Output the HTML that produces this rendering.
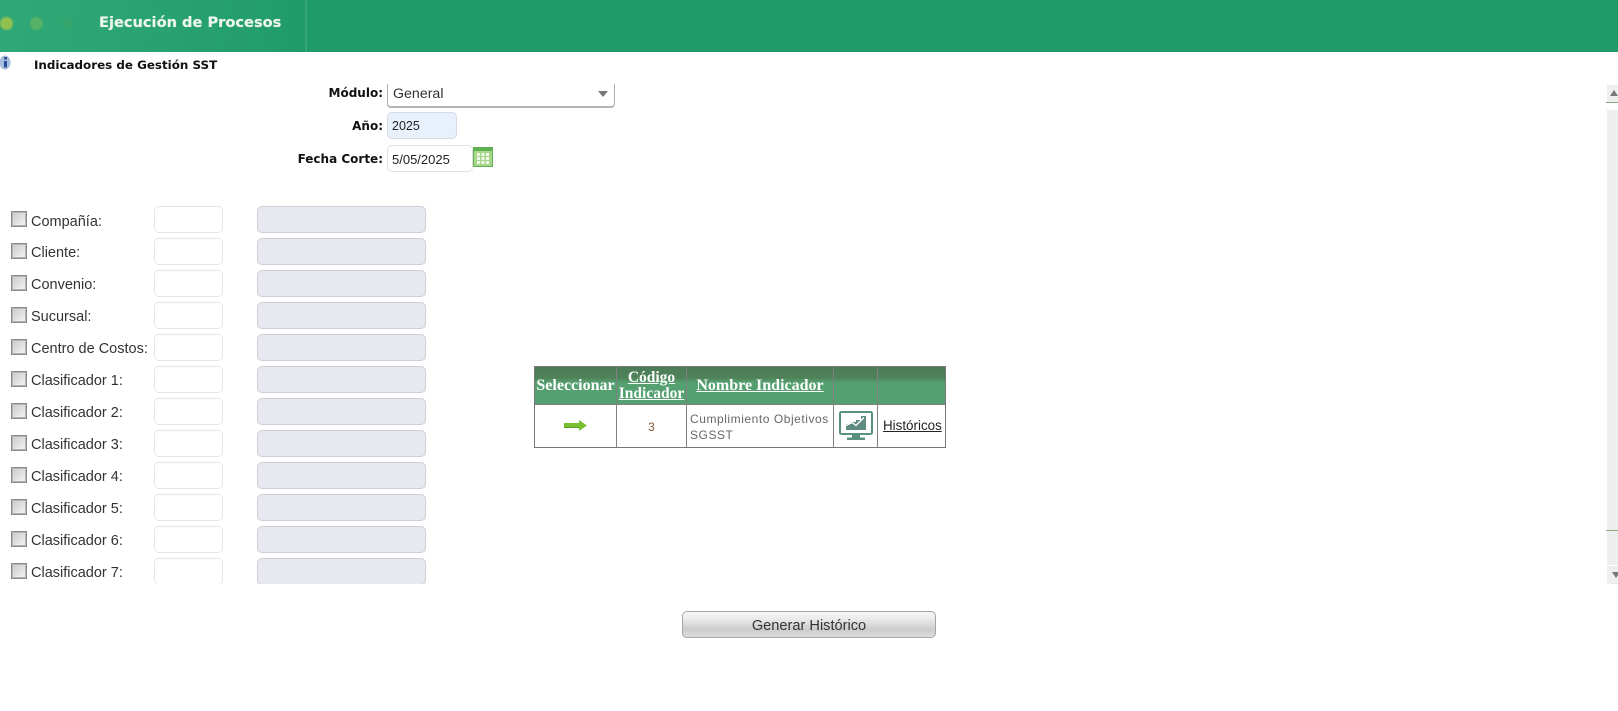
<!DOCTYPE html>
<html><head><meta charset="utf-8"><title>Ejecución de Procesos</title>
<style>
html,body{margin:0;padding:0;width:1618px;height:711px;overflow:hidden;background:#fff}
body{position:relative;font-family:"Liberation Sans",sans-serif}
.a{position:absolute;white-space:nowrap}
#hdr{left:0;top:0;width:1618px;height:52px;background:#1f9b69}
#glow{left:0;top:0;width:306px;height:52px;background:linear-gradient(100deg,#30a878 0%,#2aa372 45%,#1f9b69 100%)}
#div{left:305px;top:0;width:2px;height:52px;background:#36a679}
.dot{border-radius:50%;width:13px;height:13px;top:17px;filter:blur(.8px)}
#title{left:99px;top:13px;font:bold 14.6px/20px "DejaVu Sans",sans-serif;color:#eef6f0;width:190px;text-shadow:0 0 1px rgba(255,255,255,.5)}
#sub{left:34px;top:57px;font:bold 11.9px/16px "DejaVu Sans",sans-serif;color:#111}
.lb{font:bold 12px/16px "DejaVu Sans",sans-serif;color:#111;text-align:right;width:200px;left:183px}
.in{box-sizing:border-box;border:1px solid #e2e2e2;border-radius:5px;background:#fff;font:12.5px/27px "Liberation Sans",sans-serif;color:#222;padding-left:4px}
.t{left:31px;font:14.5px/18px "Liberation Sans",sans-serif;color:#333}
.cb{left:11px;width:16px;height:16px;box-sizing:border-box;border:1px solid #8c8c8c;box-shadow:inset 0 0 0 1px #b4b4b4;background:linear-gradient(135deg,#c8c8c8,#f6f6f6)}
.i1{left:154px;width:69px;height:27px;border:1px solid #e6e6e6;border-radius:5px;box-sizing:border-box;background:#fff}
.i2{left:257px;width:169px;height:27px;border:1px solid #cfcfd6;border-radius:5px;box-sizing:border-box;background:#e8e8f0}
#clip{left:0;top:190px;width:600px;height:394px;overflow:hidden}
#sel{left:387px;top:84px;width:228px;height:24px;box-sizing:border-box;border:1px solid #b0b0b0;border-top:0;border-radius:0 0 4px 4px;border-bottom:2px solid #b4b4b4;font:14.2px/18px "Liberation Sans",sans-serif;color:#333;padding:1px 0 0 5px}
#arr{left:598px;top:91px;width:0;height:0;border-left:5.5px solid transparent;border-right:5.5px solid transparent;border-top:6px solid #777}
#tb{left:534px;top:366px;width:412px;height:82px;box-sizing:border-box;border:1px solid #777}
#th{left:0;top:0;width:410px;height:37px;background:linear-gradient(#4b7c58 0,#4f8159 28%,#55a070 42%,#55a070 100%)}
.v{top:0;width:1px;height:80px;background:#808080}
#hb{left:0;top:37px;width:410px;height:1px;background:#808080}
.h{font:bold 16px/16px "Liberation Serif",serif;color:#fff;text-align:center}
.h u{text-decoration:underline}
#btn{left:682px;top:611px;width:254px;height:27px;box-sizing:border-box;border:1px solid #a5a5a5;border-radius:5px;background:linear-gradient(#f6f6f6 0,#ececec 25%,#cccccc 70%,#dcdcdc 100%);font:14.6px/28px "Liberation Sans",sans-serif;color:#333;text-align:center}
.sb{left:1607px;width:11px;background:#eeeeee}
.gl{left:1606px;width:12px;height:1px;background:#8fa878}
</style></head><body>
<div class="a" id="hdr"></div>
<div class="a" id="glow"></div>
<div class="a" id="div"></div>
<div class="a dot" style="left:0;background:#8fc050"></div>
<div class="a dot" style="left:30px;background:#55b264"></div>
<div class="a dot" style="left:61px;background:#33a46e"></div>
<div class="a" id="title">Ejecución de Procesos</div>

<svg class="a" style="left:0;top:55px" width="12" height="15" viewBox="0 0 12 15"><ellipse cx="5" cy="7.5" rx="5.5" ry="7" fill="#a9bfe0"/><rect x="4" y="6" width="3" height="6.5" fill="#2b4f9c"/><rect x="4" y="2" width="3" height="2.5" fill="#2b4f9c"/></svg>
<div class="a" id="sub">Indicadores de Gestión SST</div>

<div class="a lb" style="top:85px">Módulo:</div>
<div class="a" id="sel">General</div>
<div class="a" id="arr"></div>
<div class="a lb" style="top:118px">Año:</div>
<div class="a in" style="left:387px;top:112px;width:70px;height:27px;background:#e8f0fb;border-color:#d6dbe6;line-height:27px">2025</div>
<div class="a lb" style="top:151px">Fecha Corte:</div>
<div class="a in" style="left:387px;top:145px;width:86px;height:27px;font-size:13px">5/05/2025</div>
<svg class="a" style="left:473px;top:147px" width="20" height="20" viewBox="0 0 20 20"><rect x=".5" y=".5" width="19" height="19" fill="#a8d68c" stroke="#5fb04e"/><rect x="1" y="1" width="18" height="3" fill="#5fb04e"/><g fill="#eef8e6"><rect x="4" y="6" width="3" height="3"/><rect x="8.5" y="6" width="3" height="3"/><rect x="13" y="6" width="3" height="3"/><rect x="4" y="10" width="3" height="3"/><rect x="8.5" y="10" width="3" height="3"/><rect x="13" y="10" width="3" height="3"/><rect x="4" y="14" width="3" height="3"/><rect x="8.5" y="14" width="3" height="3"/><rect x="13" y="14" width="3" height="3"/></g></svg>

<div class="a" id="clip">
<div class="a cb" style="top:21px"></div><div class="a t" style="top:23px">Compañía:</div><div class="a i1" style="top:16px"></div><div class="a i2" style="top:16px"></div>
<div class="a cb" style="top:53px"></div><div class="a t" style="top:54px">Cliente:</div><div class="a i1" style="top:48px"></div><div class="a i2" style="top:48px"></div>
<div class="a cb" style="top:85px"></div><div class="a t" style="top:86px">Convenio:</div><div class="a i1" style="top:80px"></div><div class="a i2" style="top:80px"></div>
<div class="a cb" style="top:117px"></div><div class="a t" style="top:118px">Sucursal:</div><div class="a i1" style="top:112px"></div><div class="a i2" style="top:112px"></div>
<div class="a cb" style="top:149px"></div><div class="a t" style="top:150px">Centro de Costos:</div><div class="a i1" style="top:144px"></div><div class="a i2" style="top:144px"></div>
<div class="a cb" style="top:181px"></div><div class="a t" style="top:182px">Clasificador 1:</div><div class="a i1" style="top:176px"></div><div class="a i2" style="top:176px"></div>
<div class="a cb" style="top:213px"></div><div class="a t" style="top:214px">Clasificador 2:</div><div class="a i1" style="top:208px"></div><div class="a i2" style="top:208px"></div>
<div class="a cb" style="top:245px"></div><div class="a t" style="top:246px">Clasificador 3:</div><div class="a i1" style="top:240px"></div><div class="a i2" style="top:240px"></div>
<div class="a cb" style="top:277px"></div><div class="a t" style="top:278px">Clasificador 4:</div><div class="a i1" style="top:272px"></div><div class="a i2" style="top:272px"></div>
<div class="a cb" style="top:309px"></div><div class="a t" style="top:310px">Clasificador 5:</div><div class="a i1" style="top:304px"></div><div class="a i2" style="top:304px"></div>
<div class="a cb" style="top:341px"></div><div class="a t" style="top:342px">Clasificador 6:</div><div class="a i1" style="top:336px"></div><div class="a i2" style="top:336px"></div>
<div class="a cb" style="top:373px"></div><div class="a t" style="top:374px">Clasificador 7:</div><div class="a i1" style="top:368px"></div><div class="a i2" style="top:368px"></div>
</div>

<div class="a" id="tb">
 <div class="a" id="th"></div>
 <div class="a" id="hb"></div>
 <div class="a v" style="left:81px"></div>
 <div class="a v" style="left:151px"></div>
 <div class="a v" style="left:298px"></div>
 <div class="a v" style="left:342px"></div>
 <div class="a h" style="left:0;top:11px;width:81px">Seleccionar</div>
 <div class="a h" style="left:82px;top:3px;width:69px;font-size:15.5px"><u>Código</u><br><u>Indicador</u></div>
 <div class="a h" style="left:152px;top:11px;width:146px"><u>Nombre Indicador</u></div>
 <svg class="a" style="left:29px;top:52px" width="24" height="13" viewBox="0 0 24 13"><path d="M0 4h15V1l8 5.5-8 5.5V9H0z" fill="#78c030"/><path d="M0 8h15v1H0z" fill="#5f9f28"/></svg>
 <div class="a" style="left:82px;top:52px;width:69px;text-align:center;font:12px/16px 'Liberation Sans',sans-serif;color:#8a5a3a">3</div>
 <div class="a" style="left:155px;top:44px;width:142px;white-space:normal;font:12px/16px 'Liberation Sans',sans-serif;letter-spacing:.55px;color:#666">Cumplimiento Objetivos SGSST</div>
 <svg class="a" style="left:304px;top:44px" width="34" height="30" viewBox="0 0 34 30"><rect x="1" y="1" width="32" height="22" rx="1.5" fill="#fff" stroke="#5a9080" stroke-width="2"/><g fill="#5f8a80"><rect x="7" y="13" width="5" height="6"/><rect x="12" y="11" width="5" height="8"/><rect x="17" y="9" width="5" height="10"/><rect x="22" y="5" width="5" height="14"/></g><path d="M7 14.5l6-3 4 3 8-8" fill="none" stroke="#fff" stroke-width="1.4"/><rect x="13" y="24" width="8" height="2.5" fill="#5a9080"/><rect x="8" y="26.5" width="18" height="2.5" fill="#5a9080"/></svg>
 <div class="a" style="left:348px;top:37px;font:13.4px/44px 'Liberation Sans',sans-serif;color:#222;text-decoration:underline">Históricos</div>
</div>

<div class="a sb" style="top:85px;height:17px"></div>
<div class="a gl" style="top:102px"></div>
<div class="a sb" style="top:110px;height:455px"></div>
<div class="a gl" style="top:530px"></div>
<div class="a sb" style="top:566px;height:18px"></div>
<div class="a" style="left:1610px;top:90px;width:0;height:0;border-left:4.5px solid transparent;border-right:4.5px solid transparent;border-bottom:6px solid #777"></div>
<div class="a" style="left:1612px;top:572px;width:0;height:0;border-left:4.5px solid transparent;border-right:4.5px solid transparent;border-top:6px solid #777"></div>

<div class="a" id="btn">Generar Histórico</div>
</body></html>
